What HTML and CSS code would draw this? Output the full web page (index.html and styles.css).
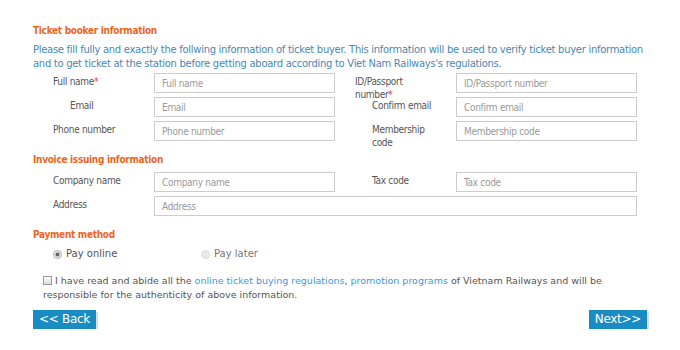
FILE: index.html
```html
<!DOCTYPE html>
<html lang="en">
<head>
<meta charset="UTF-8">
<title>Ticket booker information</title>
<link rel="stylesheet" href="styles.css">
</head>
<body>
<div class="booking">
  <h3 class="section">Ticket booker information</h3>
  <p class="intro">Please fill fully and exactly the follwing information of ticket buyer. This information will be used to verify ticket buyer information and to get ticket at the station before getting aboard according to Viet Nam Railways's regulations.</p>

  <div class="fields">
    <label class="lbl">Full name<span class="req">*</span></label>
    <input class="txt" type="text" placeholder="Full name">
    <label class="lbl lbl_right lbl_narrow">ID/Passport number<span class="req">*</span></label>
    <input class="txt" type="text" placeholder="ID/Passport number">

    <label class="lbl lbl_in">Email</label>
    <input class="txt" type="text" placeholder="Email">
    <label class="lbl lbl_right lbl_in">Confirm email</label>
    <input class="txt" type="text" placeholder="Confirm email">

    <label class="lbl">Phone number</label>
    <input class="txt" type="text" placeholder="Phone number">
    <label class="lbl lbl_right lbl_in lbl_narrow">Membership code</label>
    <input class="txt" type="text" placeholder="Membership code">
  </div>

  <h3 class="section section_gap">Invoice issuing information</h3>
  <div class="fields fields_invoice">
    <label class="lbl">Company name</label>
    <input class="txt" type="text" placeholder="Company name">
    <label class="lbl lbl_right lbl_in">Tax code</label>
    <input class="txt" type="text" placeholder="Tax code">

    <label class="lbl">Address</label>
    <input class="txt txt_wide" type="text" placeholder="Address">
  </div>

  <h3 class="section section_gap">Payment method</h3>
  <div class="pay">
    <label class="pay_opt"><span class="radio radio_on"></span>Pay online</label>
    <label class="pay_opt"><span class="radio radio_off"></span>Pay later</label>
  </div>

  <p class="agree"><span class="check"></span>I have read and abide all the <a href="#">online ticket buying regulations</a>, <a href="#">promotion programs</a> of Vietnam Railways and will be responsible for the authenticity of above information.</p>

  <div class="actions">
    <button class="btn" type="button">&lt;&lt; Back</button>
    <button class="btn" type="button">Next&gt;&gt;</button>
  </div>
</div>
</body>
</html>
```

FILE: styles.css
```css
* {
  margin: 0;
  padding: 0;
  box-sizing: border-box;
}
body {
  background-color: #fff;
  font-family: "DejaVu Sans", Verdana, sans-serif;
  font-size: 10px;
  color: #555;
}
.booking {
  padding: 24px 33px 0 33px;
}
.section {
  font-size: 10px;
  line-height: 14px;
  font-weight: bold;
  font-stretch: condensed;
  letter-spacing: -0.3px;
  color: #f0641e;
}
.section_gap {
  margin-top: 12px;
}
.intro {
  margin-top: 5px;
  line-height: 14px;
  letter-spacing: -0.29px;
  color: #4a88b5;
}
.fields {
  display: grid;
  grid-template-columns: 101px 181px 121px 181px;
  grid-auto-rows: 20px;
  row-gap: 4px;
  margin: 2px 0 0 20px;
}
.fields_invoice {
  margin-top: 5px;
}
.lbl {
  padding-top: 2px;
  line-height: 13px;
  font-stretch: condensed;
  letter-spacing: -0.3px;
  color: #555;
}
.lbl_in {
  padding-left: 17px;
}
.lbl_right {
  padding-left: 20px;
  padding-right: 10px;
}
.lbl_right.lbl_in {
  padding-left: 37px;
}
.lbl_right.lbl_narrow {
  padding-right: 30px;
}
.req {
  color: #e8314a;
}
.txt {
  height: 20px;
  border: 1px solid #ccc;
  padding: 0 7px;
  font-family: inherit;
  font-size: 10px;
  font-stretch: condensed;
  letter-spacing: -0.3px;
  color: #555;
  outline: none;
}
.txt::placeholder {
  color: #9a9a9a;
}
.txt_wide {
  grid-column: 2 / 5;
}
.pay {
  display: flex;
  margin: 5px 0 0 20px;
  line-height: 14px;
}
.pay_opt {
  display: flex;
  align-items: center;
  width: 148px;
}
.radio {
  width: 9px;
  height: 9px;
  margin-right: 4px;
  border-radius: 50%;
  border: 1px solid #c4c4c4;
  background-color: #eee;
}
.radio_on {
  background: radial-gradient(circle, #666 0, #666 1.5px, #eee 2.5px);
  border-color: #aaa;
}
.radio_off {
  background-color: #e9e9e9;
  border-color: #ddd;
}
.pay_opt:last-child {
  color: #777;
}
.agree {
  margin: 13px 0 0 10px;
  font-size: 9.5px;
  line-height: 14px;
  color: #555;
}
.check {
  display: inline-block;
  width: 9px;
  height: 9px;
  margin-right: 3px;
  vertical-align: -1px;
  border: 1px solid #999;
  background: linear-gradient(#fff, #ddd);
}
.agree a {
  color: #3c9ae0;
  text-decoration: none;
}
.actions {
  display: flex;
  justify-content: space-between;
  margin-top: 8px;
}
.btn {
  height: 19px;
  padding: 0 6px;
  border: 0;
  background-color: #1a8cc4;
  color: #fff;
  font-family: inherit;
  font-size: 12px;
  letter-spacing: -0.3px;
  line-height: 19px;
  box-shadow: 2px 2px 0 #ddd;
}
```
